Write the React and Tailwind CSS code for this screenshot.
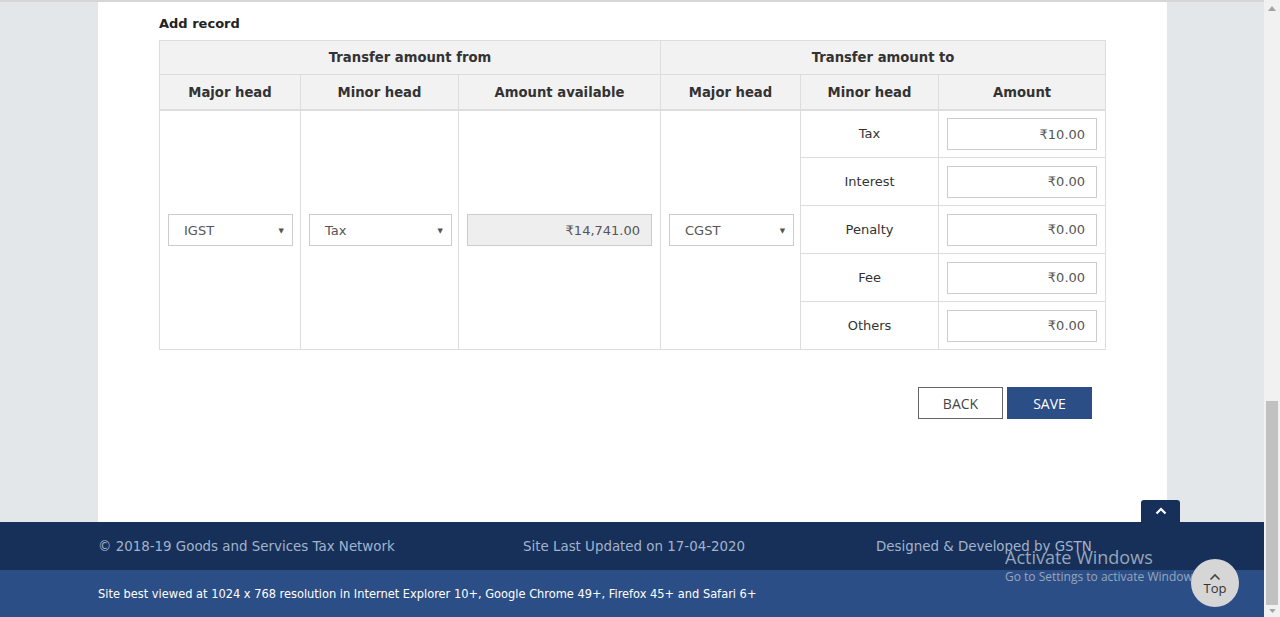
import React from "react";

const V = { fontFamily: '"DejaVu Sans", Verdana, sans-serif' };

function Select({ value, w }) {
  return (
    <div
      className={`mx-auto flex h-[32px] items-center justify-between border border-[#cccccc] bg-white pl-[15px] pr-[8px] pt-[2px] text-[13px] text-[#555555] ${w}`}
      style={V}
    >
      <span>{value}</span>
      <span className="text-[7px] text-[#555]">▼</span>
    </div>
  );
}

function AmountInput({ value, disabled }) {
  return (
    <div
      className={`flex h-[32px] items-center justify-end border border-[#cccccc] pr-[11px] pt-[1px] text-[13px] text-[#555555] ${
        disabled ? "bg-[#eeeeee]" : "bg-white"
      }`}
      style={V}
    >
      {value}
    </div>
  );
}

export default function App() {
  const minors = [
    ["Tax", "₹10.00"],
    ["Interest", "₹0.00"],
    ["Penalty", "₹0.00"],
    ["Fee", "₹0.00"],
    ["Others", "₹0.00"],
  ];
  const th =
    "border border-[#dddddd] bg-[#f2f2f2] text-[13.2px] font-bold text-[#333333] text-center";
  const td = "border border-[#dddddd] align-middle";

  return (
    <div className="flex h-[617px] w-[1280px] overflow-hidden bg-white" style={V}>
      <div className="relative flex min-w-0 flex-1 flex-col">
        <div className="h-[2px] bg-[#d6d6d6]" />
        <div className="flex flex-1">
          <div className="w-[98px] bg-[#e4e7ea]" />
          <div className="flex w-[1069px] flex-col bg-white pl-[61px] pr-[62px]">
            <div className="h-[38px] pt-[12px] text-[13px] font-bold text-[#222]">Add record</div>
            <table className="w-[946px] table-fixed border-collapse border border-[#dddddd]">
              <colgroup>
                <col className="w-[141px]" />
                <col className="w-[158px]" />
                <col className="w-[202px]" />
                <col className="w-[140px]" />
                <col className="w-[138px]" />
                <col className="w-[167px]" />
              </colgroup>
              <thead>
                <tr className="h-[34px]">
                  <th colSpan={3} className={th}>Transfer amount from</th>
                  <th colSpan={3} className={th}>Transfer amount to</th>
                </tr>
                <tr className="h-[35px] border-b-2 border-[#dddddd]">
                  <th className={`${th} pt-[2px]`}>Major head</th>
                  <th className={`${th} pt-[2px]`}>Minor head</th>
                  <th className={`${th} pt-[2px]`}>Amount available</th>
                  <th className={`${th} pt-[2px]`}>Major head</th>
                  <th className={`${th} pt-[2px]`}>Minor head</th>
                  <th className={`${th} pt-[2px]`}>Amount</th>
                </tr>
              </thead>
              <tbody>
                {minors.map(([name, amt], i) => (
                  <tr key={name} className="h-[48px]">
                    {i === 0 && (
                      <>
                        <td rowSpan={5} className={`${td} px-[8px]`}>
                          <Select value="IGST" w="w-[125px]" />
                        </td>
                        <td rowSpan={5} className={`${td} px-[8px]`}>
                          <Select value="Tax" w="w-[143px]" />
                        </td>
                        <td rowSpan={5} className={`${td} px-[8px]`}>
                          <AmountInput value="₹14,741.00" disabled />
                        </td>
                        <td rowSpan={5} className={`${td} px-[8px]`}>
                          <Select value="CGST" w="w-[125px]" />
                        </td>
                      </>
                    )}
                    <td className={`${td} text-center text-[13px] text-[#333333]`}>{name}</td>
                    <td className={`${td} px-[8px]`}>
                      <AmountInput value={amt} />
                    </td>
                  </tr>
                ))}
              </tbody>
            </table>
            <div className="mt-[37px] flex justify-end gap-[4px] pr-[13px]" style={{ fontFamily: '"Open Sans", sans-serif' }}>
              <button className="h-[32px] w-[85px] border border-[#666] bg-white text-[14px] text-[#444]">
                BACK
              </button>
              <button className="h-[32px] w-[85px] bg-[#2c4e86] text-[14px] font-medium text-white">
                SAVE
              </button>
            </div>
          </div>
          <div className="flex-1 bg-[#e4e7ea]" />
        </div>
        <footer className="relative">
          <div className="absolute -top-[22px] left-[1141px] flex h-[22px] w-[39px] items-center justify-center rounded-t-[3px] bg-[#16305a]">
            <svg width="12" height="8" viewBox="0 0 12 8">
              <path d="M1.5 6.5 L6 2 L10.5 6.5" fill="none" stroke="white" strokeWidth="2.2" />
            </svg>
          </div>
          <div className="flex h-[48px] items-center bg-[#16305a] pl-[98px] pt-[2px] text-[13.4px] text-[#a3b3cb]">
            <span className="w-[425px]">© 2018-19 Goods and Services Tax Network</span>
            <span className="w-[353px]">Site Last Updated on 17-04-2020</span>
            <span>Designed &amp; Developed by GSTN</span>
          </div>
          <div
            className="flex h-[47px] items-center bg-[#2c4e86] pl-[98px] text-[12.7px] text-white"
            style={{ fontFamily: '"DejaVu Sans Condensed", "DejaVu Sans", sans-serif', fontStretch: "condensed" }}
          >
            Site best viewed at 1024 x 768 resolution in Internet Explorer 10+, Google Chrome 49+, Firefox 45+ and Safari 6+
          </div>
          <div
            className="pointer-events-none absolute left-[1005px] top-[23px] text-[#98a6b9]"
            style={{ fontFamily: '"Open Sans", "Noto Sans", sans-serif' }}
          >
            <div className="text-[18px] leading-[24px]">Activate Windows</div>
            <div className="whitespace-nowrap text-[12px] leading-[16px]">Go to Settings to activate Windows.</div>
          </div>
          <div
            className="absolute left-[1191px] top-[37px] flex h-[48px] w-[48px] flex-col items-center justify-center rounded-full bg-[#d6d6d6] text-[#333]"
            style={{ fontFamily: '"Open Sans", sans-serif' }}
          >
            <svg width="12" height="8" viewBox="0 0 12 8" className="mt-[2px]">
              <path d="M1.5 6.5 L6 2 L10.5 6.5" fill="none" stroke="#444" strokeWidth="1.6" />
            </svg>
            <span className="text-[13px] leading-[14px]">Top</span>
          </div>
        </footer>
      </div>
      <div className="flex w-[16px] flex-col bg-[#f1f1f1]">
        <div className="flex h-[16px] items-center justify-center">
          <svg width="8" height="5" viewBox="0 0 8 5"><path d="M0 5 L4 0 L8 5Z" fill="#a3a3a3" /></svg>
        </div>
        <div className="flex-1" />
        <div className="mx-[2px] h-[204px] bg-[#c1c1c1]" />
        <div className="flex h-[12px] items-center justify-center">
          <svg width="7" height="4" viewBox="0 0 8 5"><path d="M0 0 L4 5 L8 0Z" fill="#a3a3a3" /></svg>
        </div>
      </div>
    </div>
  );
}
